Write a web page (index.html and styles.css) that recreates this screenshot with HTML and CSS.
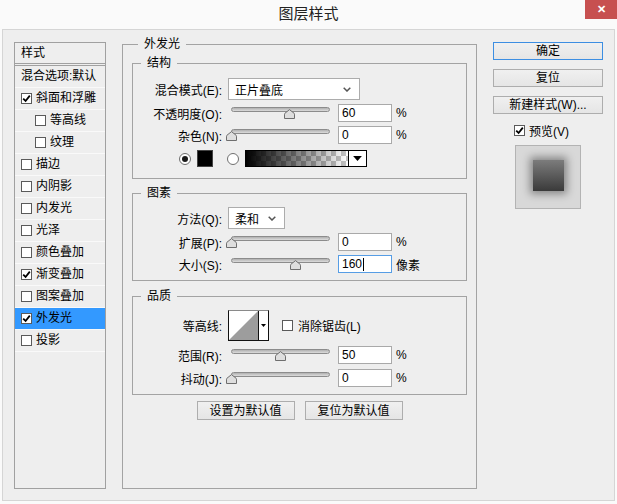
FILE: index.html
```html
<!DOCTYPE html>
<html lang="zh-CN">
<head>
  <meta charset="UTF-8">
  <meta name="viewport" content="width=device-width, initial-scale=1.0">
  <title>图层样式</title>
  <link rel="stylesheet" href="styles.css">
</head>
<body>
  <div class="titlebar">
    <span class="title">图层样式</span>
    <span class="close-btn">✕</span>
  </div>

  <div class="dialog">
    <!-- 左侧样式列表 -->
    <div class="style-list">
      <div class="list-header">样式</div>
      <div class="list-item">混合选项:默认</div>
      <div class="list-item"><span class="check"><svg viewBox="0 0 9 9"><path d="M1.2 4.6 L3.6 7 L7.8 1.6"/></svg></span>斜面和浮雕</div>
      <div class="list-item sub"><span class="check"></span>等高线</div>
      <div class="list-item sub"><span class="check"></span>纹理</div>
      <div class="list-item"><span class="check"></span>描边</div>
      <div class="list-item"><span class="check"></span>内阴影</div>
      <div class="list-item"><span class="check"></span>内发光</div>
      <div class="list-item"><span class="check"></span>光泽</div>
      <div class="list-item"><span class="check"></span>颜色叠加</div>
      <div class="list-item"><span class="check"><svg viewBox="0 0 9 9"><path d="M1.2 4.6 L3.6 7 L7.8 1.6"/></svg></span>渐变叠加</div>
      <div class="list-item"><span class="check"></span>图案叠加</div>
      <div class="list-item selected"><span class="check"><svg viewBox="0 0 9 9"><path d="M1.2 4.6 L3.6 7 L7.8 1.6"/></svg></span>外发光</div>
      <div class="list-item"><span class="check"></span>投影</div>
    </div>

    <!-- 外发光设置 -->
    <fieldset class="main-group">
      <legend>外发光</legend>

      <fieldset class="group group-struct">
        <legend>结构</legend>
        <div class="rows">
          <div class="row row-tall">
            <span class="lbl">混合模式(E):</span>
            <div class="select select-wide">正片叠底<svg class="chevron" viewBox="0 0 8 5"><path d="M0.7 0.7 L4 4 L7.3 0.7"/></svg></div>
          </div>
          <div class="row">
            <span class="lbl">不透明度(O):</span>
            <div class="slider"><div class="track"><svg class="thumb" style="left: 60%" viewBox="0 0 11 10"><path d="M0.5 9.5 V5.2 Q0.5 4.6 1 4.2 L5.5 0.6 L10 4.2 Q10.5 4.6 10.5 5.2 V9.5 Z"/></svg></div></div>
            <div class="num-input">60</div>
            <span class="unit">%</span>
          </div>
          <div class="row">
            <span class="lbl">杂色(N):</span>
            <div class="slider"><div class="track"><svg class="thumb" style="left: 0%" viewBox="0 0 11 10"><path d="M0.5 9.5 V5.2 Q0.5 4.6 1 4.2 L5.5 0.6 L10 4.2 Q10.5 4.6 10.5 5.2 V9.5 Z"/></svg></div></div>
            <div class="num-input">0</div>
            <span class="unit">%</span>
          </div>
          <div class="row row-color">
            <span class="radio on"></span>
            <span class="swatch"></span>
            <span class="radio"></span>
            <div class="gradient-box">
              <div class="gradient-fill"></div>
              <div class="gradient-arrow"><svg viewBox="0 0 7 4"><path d="M0 0 H7 L3.5 4 Z"/></svg></div>
            </div>
          </div>
        </div>
      </fieldset>

      <fieldset class="group group-elem">
        <legend>图素</legend>
        <div class="rows">
          <div class="row row-tall">
            <span class="lbl">方法(Q):</span>
            <div class="select select-short">柔和<svg class="chevron" viewBox="0 0 8 5"><path d="M0.7 0.7 L4 4 L7.3 0.7"/></svg></div>
          </div>
          <div class="row">
            <span class="lbl">扩展(P):</span>
            <div class="slider"><div class="track"><svg class="thumb" style="left: 0%" viewBox="0 0 11 10"><path d="M0.5 9.5 V5.2 Q0.5 4.6 1 4.2 L5.5 0.6 L10 4.2 Q10.5 4.6 10.5 5.2 V9.5 Z"/></svg></div></div>
            <div class="num-input">0</div>
            <span class="unit">%</span>
          </div>
          <div class="row">
            <span class="lbl">大小(S):</span>
            <div class="slider"><div class="track"><svg class="thumb" style="left: 66%" viewBox="0 0 11 10"><path d="M0.5 9.5 V5.2 Q0.5 4.6 1 4.2 L5.5 0.6 L10 4.2 Q10.5 4.6 10.5 5.2 V9.5 Z"/></svg></div></div>
            <div class="num-input focused">160<span class="caret"></span></div>
            <span class="unit">像素</span>
          </div>
        </div>
      </fieldset>

      <fieldset class="group group-quality">
        <legend>品质</legend>
        <div class="rows rows-quality">
          <div class="row row-contour">
            <span class="lbl">等高线:</span>
            <div class="contour">
              <svg class="contour-curve" viewBox="0 0 29 29"><polygon points="0,29 29,0 29,29"/></svg>
              <div class="contour-arrow"><svg viewBox="0 0 5 3"><path d="M0 0 H5 L2.5 3 Z"/></svg></div>
            </div>
            <span class="check antialias"></span>
            <span>消除锯齿(L)</span>
          </div>
          <div class="row">
            <span class="lbl">范围(R):</span>
            <div class="slider"><div class="track"><svg class="thumb" style="left: 50%" viewBox="0 0 11 10"><path d="M0.5 9.5 V5.2 Q0.5 4.6 1 4.2 L5.5 0.6 L10 4.2 Q10.5 4.6 10.5 5.2 V9.5 Z"/></svg></div></div>
            <div class="num-input">50</div>
            <span class="unit">%</span>
          </div>
          <div class="row">
            <span class="lbl">抖动(J):</span>
            <div class="slider"><div class="track"><svg class="thumb" style="left: 0%" viewBox="0 0 11 10"><path d="M0.5 9.5 V5.2 Q0.5 4.6 1 4.2 L5.5 0.6 L10 4.2 Q10.5 4.6 10.5 5.2 V9.5 Z"/></svg></div></div>
            <div class="num-input">0</div>
            <span class="unit">%</span>
          </div>
        </div>
      </fieldset>

      <div class="default-buttons">
        <button class="btn btn-default">设置为默认值</button>
        <button class="btn btn-default">复位为默认值</button>
      </div>
    </fieldset>

    <!-- 右侧按钮 -->
    <div class="side">
      <button class="btn btn-side primary">确定</button>
      <button class="btn btn-side">复位</button>
      <button class="btn btn-side">新建样式(W)...</button>
      <div class="preview-toggle">
        <span class="check"><svg viewBox="0 0 9 9"><path d="M1.2 4.6 L3.6 7 L7.8 1.6"/></svg></span>
        <span>预览(V)</span>
      </div>
      <div class="preview">
        <div class="preview-swatch"></div>
      </div>
    </div>
  </div>
</body>
</html>
```

FILE: styles.css
```css
body {
  margin: 0;
  width: 617px;
  height: 504px;
  overflow: hidden;
  background-color: #fafafa;
  font-family: "Liberation Sans", "Noto Sans CJK SC", sans-serif;
  font-size: 12px;
  color: #000;
}

/* 标题栏 */
.titlebar {
  height: 29px;
  display: grid;
  grid-template-columns: 32px 1fr 32px;
  align-items: start;
}
.title {
  grid-column: 2;
  text-align: center;
  font-family: "Noto Sans CJK SC", sans-serif;
  font-size: 15px;
  line-height: 20px;
  padding-top: 3px;
  color: #222;
}
.close-btn {
  grid-column: 3;
  height: 19px;
  line-height: 19px;
  background-color: #c75050;
  color: white;
  font-size: 11px;
  font-weight: bold;
  text-align: center;
}

.dialog {
  margin-left: 2px;
  width: 613px;
  height: 472px;
  box-sizing: border-box;
  border: 1px solid #d5d5d5;
  background-color: #eeeeee;
  display: flex;
  align-items: flex-start;
}

/* 样式列表 */
.style-list {
  margin: 12px 0 0 11px;
  width: 92px;
  height: 447px;
  box-sizing: border-box;
  border: 1px solid #a0a0a0;
  overflow: hidden;
}
.list-header {
  height: 20px;
  line-height: 20px;
  padding-left: 6px;
  border-bottom: 3px double #a0a0a0;
}
.list-item {
  height: 21px;
  line-height: 21px;
  border-bottom: 1px solid #f9f9f9;
  padding-left: 6px;
  display: flex;
  align-items: center;
  white-space: nowrap;
}
.list-item.sub {
  padding-left: 20px;
}
.list-item.selected {
  background-color: #3399ff;
}

.check {
  width: 11px;
  height: 11px;
  box-sizing: border-box;
  border: 1px solid #5a5a5a;
  background-color: white;
  margin-right: 4px;
  flex-shrink: 0;
  display: flex;
}
.check svg {
  width: 9px;
  height: 9px;
  fill: none;
  stroke: #000;
  stroke-width: 1.8;
}

/* 外发光分组 */
.main-group {
  margin: 6px 0 0 16px;
  width: 355px;
  box-sizing: border-box;
  min-width: 0;
  border: 1px solid #a3a3a3;
  padding: 3px 9px 68px 9px;
}
.main-group > legend {
  margin-left: 6px;
  padding: 0 6px;
  line-height: 16px;
}

.group {
  margin: 0;
  min-width: 0;
  border: 1px solid #a3a3a3;
}
.group > legend {
  margin-left: 8px;
  padding: 0 6px;
  line-height: 16px;
}
.group-struct {
  padding: 7px 0 11px;
}
.group-elem {
  margin-top: 6px;
  padding: 6px 0 7px;
}
.group-quality {
  margin-top: 7px;
  padding: 6px 0 7px;
}

.rows {
  display: flex;
  flex-direction: column;
  gap: 4px;
}
.rows-quality {
  gap: 5px;
}
.row {
  display: flex;
  align-items: center;
  height: 18px;
}
.row-tall {
  height: 22px;
}
.row-color {
  margin-top: 2px;
  height: 17px;
}
.row-contour {
  height: 31px;
}
.lbl {
  width: 89px;
  margin-right: 6px;
  text-align: right;
  white-space: nowrap;
  flex-shrink: 0;
}

.select {
  height: 22px;
  box-sizing: border-box;
  border: 1px solid #acacac;
  background-color: white;
  padding: 0 8px 0 6px;
  display: flex;
  align-items: center;
  justify-content: space-between;
}
.select-wide {
  width: 132px;
}
.select-short {
  width: 57px;
}
.chevron {
  width: 8px;
  height: 5px;
  fill: none;
  stroke: #555;
  stroke-width: 1.5;
}

/* 滑块 */
.slider {
  width: 105px;
  align-self: stretch;
  flex-shrink: 0;
}
.track {
  position: relative;
  margin: 3px 0 0 3px;
  width: 99px;
  height: 5px;
  box-sizing: border-box;
  border: 1px solid #8c8c8c;
  border-radius: 3px;
  background: linear-gradient(#b0b0b0, #dcdcdc);
}
.thumb {
  position: absolute;
  top: 1px;
  width: 11px;
  height: 10px;
  margin-left: -6px;
  fill: #dedede;
  stroke: #6e6e6e;
  stroke-width: 1;
}

.num-input {
  margin-left: 5px;
  width: 54px;
  height: 18px;
  box-sizing: border-box;
  border: 1px solid #a9a9a9;
  background-color: white;
  padding-left: 3px;
  line-height: 16px;
  display: flex;
  align-items: center;
}
.num-input.focused {
  border-color: #569de5;
}
.caret {
  width: 1px;
  height: 13px;
  background-color: #000;
  margin-left: 1px;
}
.unit {
  margin-left: 4px;
}

/* 颜色 / 渐变 */
.radio {
  width: 12px;
  height: 12px;
  box-sizing: border-box;
  border: 1px solid #707070;
  border-radius: 50%;
  background-color: white;
  display: flex;
  align-items: center;
  justify-content: center;
}
.radio:first-child {
  margin-left: 46px;
}
.radio.on::after {
  content: "";
  width: 6px;
  height: 6px;
  border-radius: 50%;
  background-color: #1a1a1a;
}
.swatch {
  margin: 0 14px 0 6px;
  width: 16px;
  height: 17px;
  box-sizing: border-box;
  border: 1px solid #444;
  background-color: #000;
}
.gradient-box {
  margin-left: 6px;
  width: 122px;
  height: 17px;
  box-sizing: border-box;
  border: 1px solid #000;
  display: flex;
}
.gradient-fill {
  flex: 1;
  background-image: linear-gradient(to right, #000, rgba(0, 0, 0, 0)),
    conic-gradient(#c4c4c4 25%, #fff 0 50%, #c4c4c4 0 75%, #fff 0);
  background-size: 100% 100%, 10px 10px;
}
.gradient-arrow {
  width: 17px;
  border-left: 1px solid #000;
  background-color: white;
  display: flex;
  align-items: center;
  justify-content: center;
}
.gradient-arrow svg {
  width: 9px;
  height: 5px;
}

/* 等高线 */
.contour {
  width: 41px;
  height: 31px;
  box-sizing: border-box;
  border: 1px solid #111;
  border-top-color: #8a8a8a;
  background-color: white;
  display: flex;
}
.contour-curve {
  width: 29px;
  height: 29px;
  fill: #9d9d9d;
}
.contour-arrow {
  flex: 1;
  border-left: 1px solid #111;
  display: flex;
  align-items: center;
  justify-content: center;
}
.contour-arrow svg {
  width: 5px;
  height: 3px;
}
.check.antialias {
  margin-left: 13px;
  margin-right: 5px;
}

.btn {
  font-family: "Liberation Sans", "Noto Sans CJK SC", sans-serif;
  font-size: 12px;
  color: #000;
  padding: 0;
  box-sizing: border-box;
  border: 1px solid #adadad;
  background: linear-gradient(#f0f0f0, #e5e5e5);
  line-height: 16px;
}
.default-buttons {
  margin-top: 6px;
  display: flex;
  justify-content: center;
  gap: 10px;
}
.btn-default {
  width: 98px;
  height: 19px;
}

/* 右侧 */
.side {
  margin: 12px 0 0 16px;
  width: 110px;
  display: flex;
  flex-direction: column;
  gap: 9px;
}
.btn-side {
  width: 110px;
  height: 18px;
}
.btn-side.primary {
  border-color: #3c8ee2;
}
.preview-toggle {
  margin-top: 1px;
  margin-left: 21px;
  height: 13px;
  display: flex;
  align-items: center;
}
.preview {
  margin: -1px 0 0 22px;
  width: 66px;
  height: 64px;
  box-sizing: border-box;
  border: 1px solid #b3b3b3;
  background-color: #d8d8d8;
  display: flex;
  align-items: center;
  justify-content: center;
  padding-bottom: 3px;
}
.preview-swatch {
  width: 31px;
  height: 31px;
  background: linear-gradient(#7c7c7c, #3a3a3a);
  box-shadow: 0 0 8px 3px rgba(0, 0, 0, 0.38);
}
```
